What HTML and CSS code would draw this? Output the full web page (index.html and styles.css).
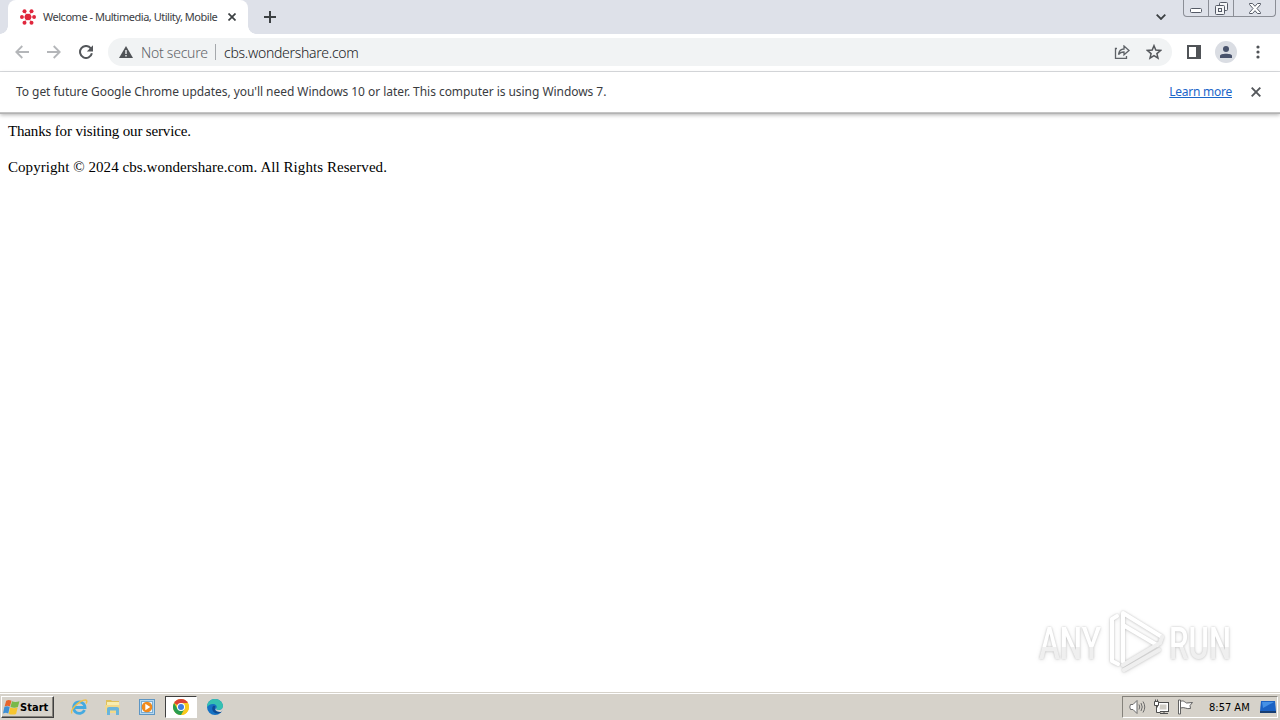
FILE: index.html
```
<!DOCTYPE html>
<html lang="en">
<head>
  <meta charset="UTF-8" />
  <title>Welcome - Multimedia, Utility, Mobile</title>
  <link rel="stylesheet" href="styles.css">
</head>
<body>
  <!-- Tabs -->
  <header class="tabstrip">
    <div class="tab">
      <svg class="favicon" width="16" height="16" viewBox="0 0 16 16" fill="#e0263c">
        <path d="M8 8L4.500 2.500M8 8l3.500-5.500M8 8H1.500M8 8h6.500M8 8l-3.500 5.500M8 8l3.500 5.500" stroke="#f08c98" stroke-width="1"/>
        <circle cx="8" cy="8" r="3.300"/><circle cx="4.500" cy="2.300" r="2"/><circle cx="11.500" cy="2.300" r="2"/>
        <circle cx="1.900" cy="8" r="1.900"/><circle cx="14.100" cy="8" r="1.900"/>
        <circle cx="4.500" cy="13.700" r="2"/><circle cx="11.500" cy="13.700" r="2"/>
      </svg>
      <span class="tab-title">Welcome - Multimedia, Utility, Mobile</span>
      <svg class="tab-close" width="8" height="8" viewBox="0 0 8 8"><path d="M.5.5l7 7M7.500.5l-7 7" stroke="#3c4043" stroke-width="1.700"/></svg>
    </div>
    <svg class="new-tab" width="12" height="12" viewBox="0 0 12 12"><path d="M6 0v12M0 6h12" stroke="#3c4043" stroke-width="2"/></svg>
    <svg class="tab-search" width="10" height="6" viewBox="0 0 10 6"><path d="M.7.700L5 5 9.300.7" fill="none" stroke="#3c4043" stroke-width="1.800"/></svg>
    <div class="window-buttons">
      <span><svg width="12" height="5" viewBox="0 0 12 5"><rect x=".5" y=".5" width="11" height="4" rx="1" fill="#fff" stroke="#555a66"/></svg></span>
      <span><svg width="13" height="13" viewBox="0 0 13 13" fill="#f4f5f7" stroke="#555a66"><rect x="4.500" y=".5" width="8" height="8" rx="1"/><rect x=".5" y="3.500" width="9" height="9" rx="1"/><rect x="3.500" y="6.500" width="3" height="3"/></svg></span>
      <span><svg width="12" height="11" viewBox="0 0 12 11"><path d="M.5.5h3L6 3.300 8.500.5h3v1L8 5.500l3.500 4v1h-3L6 7.700 3.500 10.500h-3v-1L4 5.500.5 1.500z" fill="#fff" stroke="#555a66"/></svg></span>
    </div>
  </header>

  <!-- Toolbar -->
  <div class="toolbar">
    <svg class="nav-icon" width="14" height="14" viewBox="0 0 14 14" fill="none" stroke="#b4b6b9" stroke-width="1.800"><path d="M14 7H1.500M7.300 1L1.300 7l6 6"/></svg>
    <svg class="nav-icon" width="14" height="14" viewBox="0 0 14 14" fill="none" stroke="#b4b6b9" stroke-width="1.800"><path d="M0 7h12.500M6.700 1l6 6-6 6"/></svg>
    <svg class="nav-icon" width="14" height="14" viewBox="0 0 14 14"><path d="M11.800 3.300A6 6 0 1 0 12.900 8.300" fill="none" stroke="#54575b" stroke-width="2"/><path d="M14 .3v6.200H7.800z" fill="#54575b"/></svg>
    <div class="omnibox">
      <svg width="14" height="12" viewBox="0 0 14 12"><path d="M7 0l7 12H0z" fill="#505357"/><path d="M7 4v4M7 9v1.500" stroke="#f1f3f4" stroke-width="1.400"/></svg>
      <span class="not-secure">Not secure</span>
      <span class="divider"></span>
      <span class="url">cbs.wondershare.com</span>
      <svg class="share" width="16" height="14" viewBox="0 0 16 14" fill="none" stroke="#5f6368" stroke-width="1.300"><path d="M3 3.500H1.500v9.800h11V11"/><path d="M4.500 9.500C5 6 7 4 10 4V1l5 4.500-5 4.300V7C7.500 7 5.800 7.700 4.500 9.500z"/></svg>
      <svg class="star" width="16" height="16" viewBox="0 0 16 16" fill="none" stroke="#54575b" stroke-width="1.500"><path d="M8 1.700l1.800 4.400 4.700.4-3.600 3.100 1.100 4.600L8 11.700l-4 2.500 1.100-4.600L1.500 6.500l4.700-.4z"/></svg>
    </div>
    <svg class="side-panel" width="14" height="14" viewBox="0 0 14 14"><rect x="1" y="1" width="12" height="12" fill="#fff" stroke="#505357" stroke-width="2"/><path d="M9 1h4v12H9z" fill="#505357"/></svg>
    <div class="avatar"><svg width="12" height="12" viewBox="0 0 12 12" fill="#48526b"><circle cx="6" cy="3" r="3"/><path d="M0 12V9.800C0 7 12 7 12 9.800V12z"/></svg></div>
    <svg class="menu" width="4" height="14" viewBox="0 0 4 14" fill="#505357"><circle cx="2" cy="2" r="1.600"/><circle cx="2" cy="7" r="1.600"/><circle cx="2" cy="12" r="1.600"/></svg>
  </div>

  <div class="infobar">
    <span class="infobar-text">To get future Google Chrome updates, you'll need Windows 10 or later. This computer is using Windows 7.</span>
    <a class="learn-more" href="#">Learn more</a>
    <svg width="10" height="10" viewBox="0 0 10 10"><path d="M.7.700l8.600 8.600M9.300.7L.7 9.300" stroke="#54575b" stroke-width="1.900"/></svg>
  </div>

  <main>
    <p class="thanks">Thanks for visiting our service.</p>
    <p class="copyright">Copyright © 2024 cbs.wondershare.com. All Rights Reserved.</p>
    <svg class="watermark" width="210" height="80" viewBox="0 0 210 80">
      <defs>
        <linearGradient id="fade" x1="0" y1="0" x2="0" y2="1">
          <stop offset=".56" stop-color="#fff"/><stop offset=".56" stop-color="#efefef"/>
        </linearGradient>
      </defs>
      <text x="10" y="54" textLength="62" lengthAdjust="spacingAndGlyphs">ANY</text>
      <text x="140" y="54" textLength="62" lengthAdjust="spacingAndGlyphs">RUN</text>
      <g fill="none" stroke="#fff" stroke-width="4" stroke-linejoin="round" stroke-linecap="round">
        <path d="M88 11l-5 3v42l6 3M94 57V8l39 24M94 20l34 20"/>
        <path d="M133 32l-2 6-37 22M95 65l35-20" stroke="#efefef"/>
      </g>
    </svg>
  </main>

  <!-- Taskbar -->
  <footer class="taskbar">
    <div class="start">
      <svg width="17" height="16" viewBox="0 0 16 15"><path d="M3 1.500c2-1 3-.8 5 0L6.500 7c-2-1-3-.8-5 0z" fill="#e6642c"/><path d="M8.500 2c2 1 4.500.8 7 0L14 7.500c-2 .8-4.500.8-7 0z" fill="#79b94a"/><path d="M1.300 7.500c2-1 3.200-.8 5 0L5 13.500c-2-1-3-.8-5 0z" fill="#3e8fd4"/><path d="M6.800 8c2 .9 4.400.9 7 0L12.300 14c-2 .8-4 .8-7 0z" fill="#f6c52f"/></svg>
      <span>Start</span>
    </div>
    <div class="quick">
      <span class="app"><svg width="18" height="18" viewBox="0 0 18 18" fill="none"><path d="M14.500 12A5.700 5.700 0 1 1 15 9.500H5" stroke="#45aae0" stroke-width="2.800"/><path d="M2 15.500C-1 13 9 2 15.500 2c2 0 1.500 2 .5 3.500" stroke="#efc04a" stroke-width="1.400"/></svg></span>
      <span class="app"><svg width="16" height="16" viewBox="0 0 16 16"><path d="M1 1h5l1 1h7v12H1z" fill="#dfc05a"/><path d="M2 3h12v5H2z" fill="#f7edb0"/><path d="M0 6h15l-1 8H1z" fill="#f2d98a"/><path d="M2 16V9.500Q2 8 4 8h8q2 0 2 1.500V16h-3v-4.500H5V16z" fill="#69b5dc"/></svg></span>
      <span class="app"><svg width="16" height="16" viewBox="0 0 16 16"><rect x=".5" y=".5" width="15" height="15" fill="#b7d8ef" stroke="#5d96c4"/><rect x="2.500" y="2.500" width="11" height="11" fill="#e9f3fa" stroke="#79add4"/><circle cx="8" cy="8" r="5.300" fill="#f08a1d"/><path d="M6.300 4.800l5 3.200-5 3.200z" fill="#fff"/></svg></span>
      <span class="app active"><svg width="16" height="16" viewBox="0 0 16 16"><circle cx="8" cy="8" r="8" fill="#f9c91d"/><path d="M8 8L1.070 4A8 8 0 0 1 14.930 4z" fill="#dc4236"/><path d="M8 8V4h6.930A8 8 0 0 1 8 16l3.460-6z" fill="#f9c91d"/><path d="M8 8l3.460 2L8 16A8 8 0 0 1 1.070 4L4.540 10z" fill="#2a9d50"/><circle cx="8" cy="8" r="4" fill="#fff"/><circle cx="8" cy="8" r="3" fill="#3f7de0"/></svg></span>
      <span class="app"><svg width="16" height="16" viewBox="0 0 16 16"><circle cx="8" cy="8" r="8" fill="#1672c4"/><path d="M0 8C0 3.500 3.500 0 8 0s8 3.500 8 7c0 3-2.500 4-5 4-2 0-2-1-1.500-2C10.500 7 8.500 5 6 5 3 5 1 6.500 0 8z" fill="#35c1b1"/><path d="M6 7c-2 3 0 7 4 7.500 2 .2 4-.8 5-2-1 .4-6 1-7-2C7.500 9 8 8 8.500 7.500 8 6.800 7 6.500 6 7z" fill="#0e4b94"/><path d="M9.500 9c-.5 1-.5 2 1.500 2s4.500-.5 5-3v3l-2 2c-3 0-6-1-5.500-3z" fill="#d6d3ce"/></svg></span>
    </div>
    <div class="tray">
      <svg width="17" height="16" viewBox="0 0 17 16" fill="none" stroke="#6b6b6b"><path d="M1.500 5.500h2.500L8 1.500v13l-4-4H1.500Q0 8 1.500 5.500z" fill="#fff"/><path d="M10 5.500q1.500 2.500 0 5M12 4q2.500 4 0 8M14 2.500q3.500 5.500 0 11"/></svg>
      <svg width="17" height="16" viewBox="0 0 17 16" fill="#fff" stroke="#4e4e4e"><rect x="4.500" y="3.500" width="11" height="9"/><path d="M7 5.500h6.500v5H6.500z" fill="#cfccc5" stroke="none"/><path d="M7 14.500h8M11 12.500v2"/><path d="M1.500 2.500h4v4h-4zM2.500.5v2M4.500.5v2M3.500 6.500v7h4"/></svg>
      <svg width="17" height="16" viewBox="0 0 17 16" fill="#fff" stroke="#626262"><path d="M3.500 2.500c3-1.500 4 .5 6 1.500l6-.5-2.500 3 .5 3c-4 1-6-2-10-.5z"/><path d="M1.500 1v14h2V1z"/></svg>
      <span class="clock">8:57 AM</span>
      <svg width="16" height="15" viewBox="0 0 16 15"><path d="M1 1h14l1 10H0z" fill="#1b62c4"/><path d="M2 2h12L3 8z" fill="#4591e6"/><path d="M0 11h16v2H0z" fill="#173d72"/></svg>
    </div>
  </footer>
</body>
</html>
```
FILE: styles.css
```
* {
  box-sizing: border-box;
}

body {
  margin: 0;
  width: 1280px;
  height: 720px;
  overflow: hidden;
  display: flex;
  flex-direction: column;
  background: #fff;
  font-family: "DejaVu Sans Condensed", "DejaVu Sans", sans-serif;
  white-space: nowrap;
}

svg {
  display: block;
  flex-shrink: 0;
}

/* Tabs */
.tabstrip {
  height: 34px;
  background: #dee1e9;
  display: flex;
  align-items: center;
  padding-left: 8px;
}

.tab {
  position: relative;
  width: 240px;
  height: 34px;
  background: #fff;
  border-radius: 8px 8px 0 0;
  display: flex;
  align-items: center;
  padding-left: 12px;
}

.tab::before,
.tab::after {
  content: "";
  position: absolute;
  bottom: 0;
  width: 8px;
  height: 8px;
}

.tab::before {
  left: -8px;
  background: radial-gradient(circle at 0 0, #dee1e9 7.5px, #fff 8px);
}

.tab::after {
  right: -8px;
  background: radial-gradient(circle at 100% 0, #dee1e9 7.5px, #fff 8px);
}

.tab-title {
  width: 177px;
  margin-left: 7px;
  padding-bottom: 2px;
  font-family: "Noto Sans", sans-serif;
  font-size: 11px;
  letter-spacing: -0.48px;
  color: #3c4043;
}

.tab-close {
  margin-left: 8px;
}

.new-tab {
  margin-left: 16px;
}

.tab-search {
  margin-left: auto;
}

.window-buttons {
  align-self: flex-start;
  display: flex;
  width: 93px;
  height: 17px;
  margin: 0 4px 0 17px;
  border: 1px solid #8b8e96;
  border-top: none;
  border-radius: 0 0 4px 4px;
}

.window-buttons span {
  width: 25px;
  display: flex;
  align-items: center;
  justify-content: center;
}

.window-buttons span:first-child {
  width: 24px;
  padding-top: 5px;
}

.window-buttons span + span {
  border-left: 1px solid #8b8e96;
}

.window-buttons span:last-child {
  width: 42px;
}

/* Toolbar */
.toolbar {
  height: 38px;
  border-bottom: 1px solid #dadcdf;
  display: flex;
  align-items: center;
  padding: 0 0 1px 15px;
}

.nav-icon {
  margin-right: 18px;
}

.omnibox {
  width: 1064px;
  height: 28px;
  margin-left: -3px;
  background: #f1f3f4;
  border-radius: 14px;
  display: flex;
  align-items: center;
  padding: 0 10px 0 11px;
  font-family: "Noto Sans", sans-serif;
  font-size: 14px;
  font-weight: 300;
}

.not-secure {
  width: 68px;
  margin-left: 8px;
  letter-spacing: -0.25px;
  color: #5f6368;
}

.divider {
  width: 1px;
  height: 16px;
  margin: 0 8px 0 6px;
  background: #a5a8ac;
}

.url {
  color: #202124;
  letter-spacing: -0.28px;
}

.share {
  margin-left: auto;
}

.star {
  margin-left: 16px;
}

.side-panel {
  margin-left: 15px;
}

.avatar {
  width: 22px;
  height: 22px;
  margin-left: 14px;
  border-radius: 50%;
  background: #dadde3;
  display: flex;
  align-items: center;
  justify-content: center;
}

.menu {
  margin-left: 19px;
}

/* Update notice */
.infobar {
  position: relative;
  height: 41px;
  padding: 0 19px 0 16px;
  border-bottom: 1px solid #c4c4c4;
  box-shadow: 0 1px 0 #b3b3b3, 0 2px 4px rgba(0, 0, 0, 0.3);
  display: flex;
  align-items: center;
  font-family: "Noto Sans", sans-serif;
  font-size: 12px;
  color: #3a3c3f;
}

.infobar-text {
  padding-bottom: 2px;
  letter-spacing: -0.05px;
}

.learn-more {
  margin: 0 19px 0 auto;
  padding-bottom: 2px;
  letter-spacing: -0.25px;
  color: #1b66c9;
}

/* Page */
main {
  position: relative;
  flex: 1;
  padding: 9px 8px;
  font-family: "Liberation Serif", serif;
  font-size: 15px;
  line-height: 18px;
  color: #000;
}

main p {
  margin: 0 0 18px;
}

.thanks {
  letter-spacing: -0.16px;
}

.copyright {
  letter-spacing: 0.06px;
}

.watermark {
  position: absolute;
  left: 1029px;
  bottom: 7px;
  overflow: visible;
  filter: drop-shadow(0 0 1px rgba(0, 0, 0, 0.2)) drop-shadow(0 1px 2px rgba(0, 0, 0, 0.1));
}

.watermark text {
  font-family: Roboto, sans-serif;
  font-size: 44px;
  font-weight: 500;
  fill: url(#fade);
}

/* Taskbar */
.taskbar {
  height: 28px;
  background: #d6d2ca;
  border-top: 1px solid #d6d2ca;
  box-shadow: inset 0 1px #fff;
  display: flex;
  align-items: center;
  padding: 3px 2px 2px 1px;
}

.start {
  width: 53px;
  height: 22px;
  border: 1px solid;
  border-color: #fff #404040 #404040 #fff;
  box-shadow: inset -1px -1px #85827b;
  display: flex;
  align-items: center;
  padding-left: 1px;
  font-size: 11px;
  font-weight: bold;
  color: #000;
}

.start span {
  letter-spacing: 0.05px;
}

.quick {
  display: flex;
  margin-left: 9px;
  gap: 2px;
}

.app {
  width: 32px;
  height: 22px;
  display: flex;
  align-items: center;
  justify-content: center;
}

.active {
  background: #fff;
  border: 1px solid;
  border-color: #404040 #fff #fff #404040;
}

.tray {
  width: 156px;
  height: 22px;
  margin-left: auto;
  border: 1px solid;
  border-color: #85827b #fff #fff #85827b;
  display: flex;
  align-items: center;
  gap: 7px;
  padding-left: 6px;
  font-size: 11px;
  color: #000;
}

.clock {
  width: 42px;
  margin: 0 2px 0 8px;
  letter-spacing: 0;
}
```
